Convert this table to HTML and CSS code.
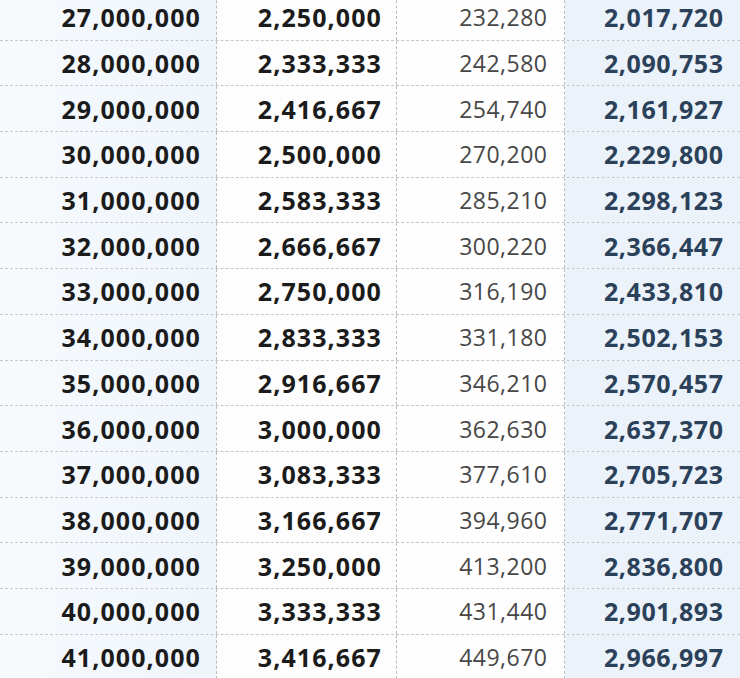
FILE: index.html
```html
<!DOCTYPE html>
<html>
<head>
<meta charset="utf-8">
<link rel="stylesheet" href="styles.css">
</head>
<body>
<div class="sheet">
  <div class="row"><div class="c c1">27,000,000</div><div class="c c2">2,250,000</div><div class="c c3">232,280</div><div class="c c4">2,017,720</div></div>
  <div class="row"><div class="c c1">28,000,000</div><div class="c c2">2,333,333</div><div class="c c3">242,580</div><div class="c c4">2,090,753</div></div>
  <div class="row"><div class="c c1">29,000,000</div><div class="c c2">2,416,667</div><div class="c c3">254,740</div><div class="c c4">2,161,927</div></div>
  <div class="row"><div class="c c1">30,000,000</div><div class="c c2">2,500,000</div><div class="c c3">270,200</div><div class="c c4">2,229,800</div></div>
  <div class="row"><div class="c c1">31,000,000</div><div class="c c2">2,583,333</div><div class="c c3">285,210</div><div class="c c4">2,298,123</div></div>
  <div class="row"><div class="c c1">32,000,000</div><div class="c c2">2,666,667</div><div class="c c3">300,220</div><div class="c c4">2,366,447</div></div>
  <div class="row"><div class="c c1">33,000,000</div><div class="c c2">2,750,000</div><div class="c c3">316,190</div><div class="c c4">2,433,810</div></div>
  <div class="row"><div class="c c1">34,000,000</div><div class="c c2">2,833,333</div><div class="c c3">331,180</div><div class="c c4">2,502,153</div></div>
  <div class="row"><div class="c c1">35,000,000</div><div class="c c2">2,916,667</div><div class="c c3">346,210</div><div class="c c4">2,570,457</div></div>
  <div class="row"><div class="c c1">36,000,000</div><div class="c c2">3,000,000</div><div class="c c3">362,630</div><div class="c c4">2,637,370</div></div>
  <div class="row"><div class="c c1">37,000,000</div><div class="c c2">3,083,333</div><div class="c c3">377,610</div><div class="c c4">2,705,723</div></div>
  <div class="row"><div class="c c1">38,000,000</div><div class="c c2">3,166,667</div><div class="c c3">394,960</div><div class="c c4">2,771,707</div></div>
  <div class="row"><div class="c c1">39,000,000</div><div class="c c2">3,250,000</div><div class="c c3">413,200</div><div class="c c4">2,836,800</div></div>
  <div class="row"><div class="c c1">40,000,000</div><div class="c c2">3,333,333</div><div class="c c3">431,440</div><div class="c c4">2,901,893</div></div>
  <div class="row"><div class="c c1">41,000,000</div><div class="c c2">3,416,667</div><div class="c c3">449,670</div><div class="c c4">2,966,997</div></div>
</div>
</body>
</html>
```
FILE: styles.css
```css
html, body {
  margin: 0;
  padding: 0;
  background: #ffffff;
  overflow: hidden;
}
body {
  width: 740px;
  height: 678px;
  font-family: "Open Sans", "Noto Sans", sans-serif;
}
.sheet {
  margin-top: -5px;
  display: flex;
  flex-direction: column;
}
.row {
  display: grid;
  grid-template-columns: 217px 180px 168px 175px;
  height: 45.7px;
  box-sizing: border-box;
  border-bottom: 1px dashed #c4c7cb;
}
.c {
  display: flex;
  align-items: center;
  justify-content: flex-end;
  box-sizing: border-box;
  white-space: nowrap;
}
.c1 {
  background: linear-gradient(to right, #f7fafd, #eef5fb);
  border-right: 1px dashed #b9bcc0;
  padding-right: 15px;
  font-weight: 700;
  font-size: 25px;
  letter-spacing: 1.1px;
  color: #1b1b1b;
}
.c2 {
  background: #fdfdfd;
  border-right: 1px dashed #b9bcc0;
  padding-right: 14px;
  font-weight: 700;
  font-size: 25px;
  letter-spacing: 1.1px;
  color: #1b1b1b;
}
.c3 {
  background: #fefefe;
  border-right: 1px dashed #b9bcc0;
  padding-right: 16.5px;
  font-weight: 400;
  font-size: 23px;
  letter-spacing: 0.5px;
  color: #474747;
}
.c4 {
  background: #ebf2f9;
  padding-right: 16.4px;
  font-weight: 700;
  font-size: 25px;
  letter-spacing: 0.6px;
  color: #2b4159;
}
```
